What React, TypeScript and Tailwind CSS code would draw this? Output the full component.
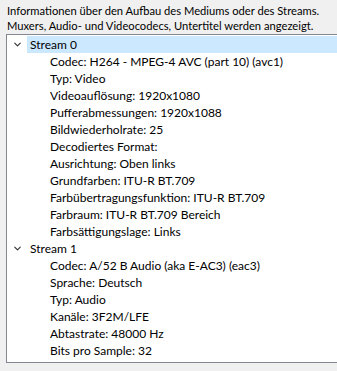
import { ChevronDown } from 'lucide-react';

const streams = [
  {
    name: 'Stream 0',
    items: [
      'Codec: H264 - MPEG-4 AVC (part 10) (avc1)',
      'Typ: Video',
      'Videoauflösung: 1920x1080',
      'Pufferabmessungen: 1920x1088',
      'Bildwiederholrate: 25',
      'Decodiertes Format:',
      'Ausrichtung: Oben links',
      'Grundfarben: ITU-R BT.709',
      'Farbübertragungsfunktion: ITU-R BT.709',
      'Farbraum: ITU-R BT.709 Bereich',
      'Farbsättigungslage: Links',
    ],
  },
  {
    name: 'Stream 1',
    items: [
      'Codec: A/52 B Audio (aka E-AC3) (eac3)',
      'Sprache: Deutsch',
      'Typ: Audio',
      'Kanäle: 3F2M/LFE',
      'Abtastrate: 48000 Hz',
      'Bits pro Sample: 32',
    ],
  },
];

export default function App() {
  return (
    <div
      className="w-[337px] h-[371px] overflow-hidden bg-[#f0f0f0] text-black text-[12px]"
      style={{ fontFamily: 'Lato, "Segoe UI", sans-serif' }}
    >
      <p className="pl-[7px] pt-[3px] text-[11.2px] leading-[15px] whitespace-nowrap">
        Informationen über den Aufbau des Mediums oder des Streams.<br />
        Muxers, Audio- und Videocodecs, Untertitel werden angezeigt.
      </p>

      {/* Tree view */}
      <div className="ml-[6px] mt-[1px] w-[340px] h-[329px] border border-r-0 border-[#828790] bg-white pt-[1px]">
        {streams.map((s, i) => (
          <div key={s.name}>
            <div className="flex items-center h-[17px]">
              <ChevronDown className="ml-[5px] w-[11px] h-[11px] text-[#333]" strokeWidth={2.5} />
              <span
                className={`ml-[4px] h-[17px] flex-1 pl-[3px] leading-[17px] ${
                  i === 0 ? 'bg-[#cce8ff]' : ''
                }`}
              >
                {s.name}
              </span>
            </div>
            {s.items.map((t) => (
              <div key={t} className="h-[17px] pl-[43px] leading-[17px] whitespace-nowrap">
                {t}
              </div>
            ))}
          </div>
        ))}
      </div>
    </div>
  );
}
